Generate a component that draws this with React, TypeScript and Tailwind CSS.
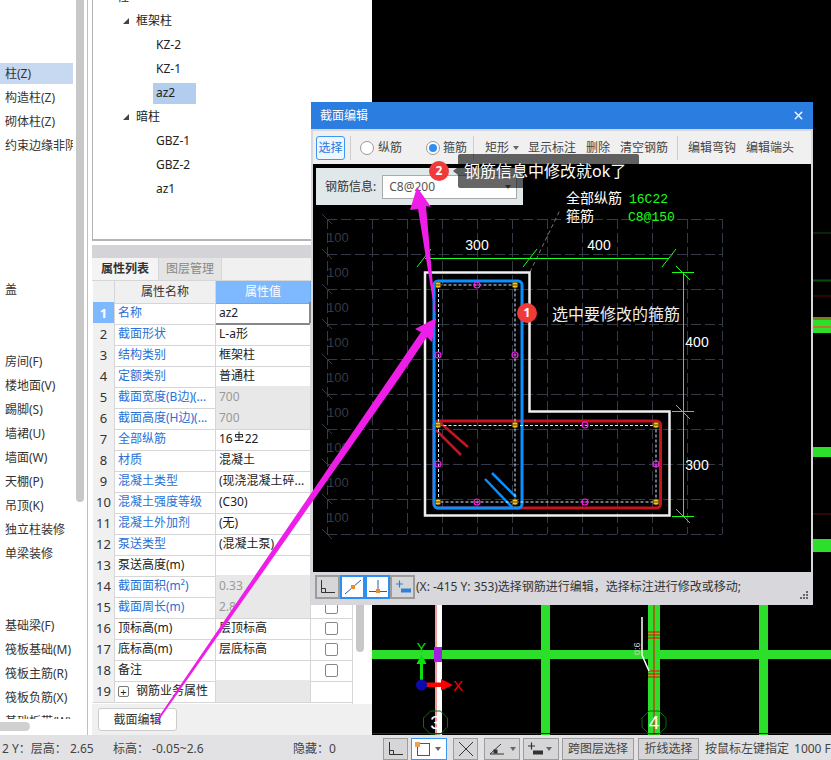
import type { ReactNode } from 'react';
import { X } from 'lucide-react';

type Row = {
  name: ReactNode;
  value?: ReactNode;
  blue?: boolean;
  locked?: boolean;
  check?: boolean;
};

const navItems = [
  '柱(Z)', '构造柱(Z)', '砌体柱(Z)', '约束边缘非阴', '', '', '', '', '', '盖', '', '',
  '房间(F)', '楼地面(V)', '踢脚(S)', '墙裙(U)', '墙面(W)', '天棚(P)', '吊顶(K)', '独立柱装修', '单梁装修', '', '',
  '基础梁(F)', '筏板基础(M)', '筏板主筋(R)', '筏板负筋(X)', '基础板带(W)',
];

const treeItems = [
  { label: '柱', level: 0 },
  { label: '框架柱', level: 1 },
  { label: 'KZ-2', level: 2 },
  { label: 'KZ-1', level: 2 },
  { label: 'az2', level: 2, active: true },
  { label: '暗柱', level: 1 },
  { label: 'GBZ-1', level: 2 },
  { label: 'GBZ-2', level: 2 },
  { label: 'az1', level: 2 },
];

// 三级钢符号
const RebarMark = () => (
  <svg width="10" height="11" viewBox="0 0 10 11" className="mx-px inline-block align-[1px]">
    <path d="M1.5 6V3.5h7V6M1.5 6h7M5 0.5V9M0.5 9.5h9" fill="none" stroke="#222" strokeWidth="1" />
  </svg>
);

const rows: Row[] = [
  { name: '名称', value: 'az2', blue: true },
  { name: '截面形状', value: 'L-a形', blue: true },
  { name: '结构类别', value: '框架柱', blue: true },
  { name: '定额类别', value: '普通柱', blue: true },
  { name: '截面宽度(B边)(...', value: '700', blue: true, locked: true },
  { name: '截面高度(H边)(...', value: '700', blue: true, locked: true },
  { name: '全部纵筋', value: <>16<RebarMark />22</>, blue: true },
  { name: '材质', value: '混凝土', blue: true },
  { name: '混凝土类型', value: '(现浇混凝土碎...', blue: true },
  { name: '混凝土强度等级', value: '(C30)', blue: true },
  { name: '混凝土外加剂', value: '(无)', blue: true },
  { name: '泵送类型', value: '(混凝土泵)', blue: true },
  { name: '泵送高度(m)' },
  { name: '截面面积(m²)', value: '0.33', blue: true, locked: true },
  { name: '截面周长(m)', value: '2.8', blue: true, locked: true, check: true },
  { name: '顶标高(m)', value: '层顶标高', check: true },
  { name: '底标高(m)', value: '层底标高', check: true },
  { name: '备注', check: true },
];

const hGrid = [219, 254, 289, 324, 359, 394, 429, 464, 499, 534];
const vGrid = [327, 372, 407, 442, 477, 512, 547, 582, 617, 652, 687, 722];
const yellowBars = [[438, 285], [515, 285], [438, 425], [515, 425], [656, 425], [438, 502], [515, 502], [656, 502]];
const pinkBars = [[477, 285], [438, 355], [515, 355], [585, 425], [438, 464], [656, 464], [477, 502], [585, 502]];

const Tick = ({ x, y }: { x: number; y: number }) => (
  <line x1={x - 7} y1={y + 9} x2={x + 7} y2={y - 9} stroke="#19ff19" strokeWidth="1" />
);

function SectionDrawing() {
  return (
    <svg viewBox="313 164 498 408" className="block h-[408px] w-[498px]">
      {hGrid.map((y) => (
        <path key={y} d={`M327 ${y + 0.5}H722`} stroke="#343b47" strokeWidth="1" strokeDasharray="10 4" />
      ))}
      {vGrid.map((x) => (
        <path key={x} d={`M${x + 0.5} 219V534`} stroke="#343b47" strokeWidth="1" strokeDasharray="10 4" />
      ))}
      {hGrid.map((y) => (
        <path key={y} d={`M322 ${y - 5}L332 ${y + 5}`} stroke="#343b47" />
      ))}
      {hGrid.slice(0, 9).map((y) => (
        <text key={y} x="327" y={y + 23} fontSize="13" fill="#343b47" fontFamily="Liberation Sans">100</text>
      ))}
      <path d="M530 272L560 210" stroke="#777" strokeDasharray="4 3" />

      <line x1="425" y1="258.5" x2="669" y2="258.5" stroke="#19ff19" />
      <line x1="683.5" y1="272" x2="683.5" y2="516" stroke="#19ff19" />
      <line x1="672" y1="272.5" x2="694" y2="272.5" stroke="#19ff19" />
      <line x1="672" y1="411.5" x2="694" y2="411.5" stroke="#19ff19" />
      <line x1="672" y1="516.5" x2="694" y2="516.5" stroke="#19ff19" />
      <Tick x={424} y={258} />
      <Tick x={530} y={258} />
      <Tick x={669} y={258} />
      <path d="M676 266L690 280M676 405L690 419M676 509L690 523" stroke="#19ff19" />
      <g fontSize="14" fill="#fff" fontFamily="Liberation Sans" textAnchor="middle">
        <text x="477" y="250">300</text>
        <text x="599" y="250">400</text>
        <text x="697" y="347">400</text>
        <text x="697" y="470">300</text>
      </g>

      <path d="M425 272.5H529.5V411.5H669.5V515.5H425Z" fill="none" stroke="#efefef" strokeWidth="2.5" />
      <rect x="434" y="421" width="226.500" height="87" rx="4" fill="none" stroke="#c8141e" strokeWidth="3" />
      <path d="M437 420L468 447M436 430L461 455" stroke="#c8141e" strokeWidth="2.500" />
      <rect x="434" y="281" width="88" height="227" rx="4" fill="none" stroke="#0a8fff" strokeWidth="3" />
      <path d="M492 473L516 497M485 479L512 507" stroke="#0a8fff" strokeWidth="2.500" />
      <path d="M438.500 285H515V502H438.500ZM515 425.500H656V502H515M438.500 425.500H515" fill="none" stroke="#dce8ff" strokeDasharray="3 2" />
      {yellowBars.map(([x, y]) => (
        <g key={`${x}-${y}`}>
          <circle cx={x} cy={y} r="3" fill="#f5c518" stroke="#6b5200" strokeWidth="0.8" />
          <path d={`M${x - 3} ${y}H${x + 3}`} stroke="#222" strokeWidth="0.8" />
        </g>
      ))}
      {pinkBars.map(([x, y]) => (
        <g key={`${x}-${y}`}>
          <circle cx={x} cy={y} r="3" fill="none" stroke="#f01ce8" strokeWidth="1.200" />
          <path d={`M${x - 3} ${y}H${x + 3}`} stroke="#f01ce8" strokeWidth="0.8" />
        </g>
      ))}

      <g fontSize="14" fontFamily="Noto Sans CJK SC">
        <text x="566" y="203" fill="#fff">全部纵筋</text>
        <text x="566" y="221" fill="#fff">箍筋</text>
      </g>
      <g fontSize="13" fontFamily="Liberation Mono" fill="#19ff19">
        <text x="629" y="203">16C22</text>
        <text x="628" y="221">C8@150</text>
      </g>
    </svg>
  );
}

function CadCanvas() {
  return (
    <svg viewBox="372 0 459 735" className="block h-[735px] w-[459px]">
      <path d="M813 233H831" stroke="#0b4a0b" />
      <path d="M813 280.500H831" stroke="#0b4a0b" strokeWidth="2" />
      <path d="M813 296H831" stroke="#5a0a0a" />
      <rect x="813" y="317" width="18" height="3" fill="#7d7d20" />
      <rect x="813" y="320" width="18" height="13" fill="#2bdf2b" />
      <rect x="813" y="326" width="18" height="2" fill="#b9782a" />
      <rect x="813" y="447" width="18" height="10" fill="#2bdf2b" />
      <path d="M813 514H831" stroke="#5a0a0a" />
      <rect x="813" y="539" width="18" height="13" fill="#2bdf2b" />

      <rect x="541" y="600" width="9" height="135" fill="#2bdf2b" />
      <rect x="648" y="600" width="12" height="135" fill="#2bdf2b" />
      <rect x="759" y="600" width="9" height="135" fill="#2bdf2b" />
      <rect x="372" y="650" width="459" height="9" fill="#2bdf2b" />
      <rect x="435" y="600" width="7" height="135" fill="#fff" />
      <path d="M436 600V735" stroke="#e33" />
      <rect x="434" y="647" width="8" height="15" fill="#a020e0" />

      <path d="M654 600V735" stroke="#f00" />
      <path d="M648 632H660M648 635H660M648 638H660M648 671H660M648 674H660M648 677H660" stroke="#f00" />
      <path d="M642 617V655L649 671" fill="none" stroke="#fff" strokeWidth="1.500" />
      <text x="0" y="0" transform="translate(640 655) rotate(-90)" fontSize="9" fill="#ccc" fontFamily="Liberation Sans">0:6</text>

      <path d="M372 733.500H831" stroke="#6b0a0a" />

      <path d="M420 683V664H416.500L421.500 654L426.500 664H423V683Z" fill="#0be00b" />
      <path d="M426 682.500H441V679L453 685L441 690.500V687H426Z" fill="#f00" />
      <circle cx="421.500" cy="685" r="5.500" fill="#0a0ab0" />
      <text x="421.500" y="653" fontSize="14" fill="#0be00b" textAnchor="middle" fontFamily="Liberation Sans">Y</text>
      <text x="453" y="691" fontSize="15" fill="#f00" fontFamily="Liberation Sans">X</text>

      {[[435.500, '3'], [654, '4']].map(([x, label]) => (
        <g key={label as string}>
          <path
            d={`M${(x as number) - 5} 711L${(x as number) + 5} 711L${(x as number) + 12} 718L${(x as number) + 12} 727L${(x as number) + 5} 734L${(x as number) - 5} 734L${(x as number) - 12} 727L${(x as number) - 12} 718Z`}
            fill="none"
            stroke="#0b6b0b"
          />
          <text x={x as number} y="729" fontSize="19" fill="#fff" textAnchor="middle" fontFamily="Liberation Sans">{label}</text>
        </g>
      ))}
    </svg>
  );
}

const ToolButton = ({ active, children }: { active?: boolean; children: ReactNode }) => (
  <div className={`flex h-6 w-[25px] items-center justify-center border-2 ${active ? 'border-[#2f8ff0] bg-white' : 'border-[#9c9c9c] bg-[#d6d6d9]'}`}>
    {children}
  </div>
);

const OrthoIcon = () => (
  <svg width="16" height="14" viewBox="0 0 16 14" fill="none" stroke="#333">
    <path d="M1.500 0V12.500H15M1.500 8.500H5.500V12.500" />
  </svg>
);
const MidIcon = () => (
  <svg width="18" height="16" viewBox="0 0 18 16" fill="none">
    <path d="M1 15L17 1" stroke="#2a5fa8" />
    <rect x="7" y="6" width="4" height="4" fill="#f08a24" />
  </svg>
);
const PerpIcon = () => (
  <svg width="18" height="14" viewBox="0 0 18 14" fill="none">
    <path d="M9 0V12M0 11.500H18" stroke="#2a5fa8" />
    <rect x="7" y="9" width="4" height="4" fill="#f08a24" />
  </svg>
);
const DimIcon = ({ color = '#2f80d8' }: { color?: string }) => (
  <svg width="16" height="14" viewBox="0 0 16 14" fill="none">
    <path d="M1 4H8M4.500 0.500V7.500" stroke={color} strokeWidth="1.200" />
    <rect x="6" y="8.500" width="10" height="4" fill={color} />
  </svg>
);
const Caret = () => <span className="block h-0 w-0 border-x-[3.500px] border-t-[4px] border-x-transparent border-t-[#666]" />;

function SectionDialog() {
  return (
    <div className="absolute left-[311px] top-[102px] flex h-[503px] w-[502px] flex-col bg-[#d8d8dc]">
      <div className="flex h-[27px] items-center justify-between bg-[#2b7de0] pl-[9px] pr-[8px] text-[12px] text-white">
        <span>截面编辑</span>
        <X size={13} strokeWidth={2.500} />
      </div>
      <div className="mx-[2px] mt-[2px] flex h-[33px] items-center bg-[#f0f0f0] pl-[3px] text-[12px] text-[#444]">
        <span className="flex h-[24px] w-[29px] items-center justify-center rounded-[3px] border border-[#3d96f0] bg-[#eef6ff] text-[#1f7ae0]">选择</span>
        <span className="mx-[5px] h-6 w-px bg-[#ccc]" />
        <span className="ml-[4px] h-[14px] w-[14px] rounded-full border border-[#999] bg-white" />
        <span className="ml-[4px]">纵筋</span>
        <span className="ml-[24px] flex h-[14px] w-[14px] items-center justify-center rounded-full border border-[#999] bg-white">
          <span className="h-2 w-2 rounded-full bg-[#2f8ff0]" />
        </span>
        <span className="ml-[3px]">箍筋</span>
        <span className="ml-[6px] mr-[5px] h-6 w-px bg-[#ccc]" />
        <span className="ml-[6px]">矩形</span>
        <span className="ml-[4px] mr-[9px]"><Caret /></span>
        <span>显示标注</span>
        <span className="ml-[10px]">删除</span>
        <span className="ml-[10px]">清空钢筋</span>
        <span className="mx-[9px] h-6 w-px bg-[#ccc]" />
        <span className="ml-px">编辑弯钩</span>
        <span className="ml-[10px]">编辑端头</span>
      </div>
      <div className="relative mx-[2px] h-[408px] bg-black">
        <SectionDrawing />
        <div className="absolute left-[3px] top-[4px] flex h-[37px] w-[207px] items-center bg-[#e1e8ea] pl-[9px] text-[12px] text-[#333]">
          <span>钢筋信息:</span>
          <div className="ml-[6px] flex h-[24px] w-[135px] items-center justify-between border border-[#aaa] bg-white pl-[6px] pr-[5px] text-[#555]">
            <span>C8@200</span>
            <Caret />
          </div>
        </div>
      </div>
      <div className="mx-[2px] flex h-[29px] items-center pl-[2px] text-[12px] text-[#333]">
        <ToolButton><OrthoIcon /></ToolButton>
        <ToolButton active><MidIcon /></ToolButton>
        <ToolButton active><PerpIcon /></ToolButton>
        <ToolButton><DimIcon /></ToolButton>
        <span className="ml-px whitespace-nowrap">(X: -415 Y: 353)选择钢筋进行编辑，选择标注进行修改或移动;</span>
      </div>
      <svg width="8" height="8" viewBox="0 0 8 8" fill="#666" className="absolute bottom-[6px] right-[5px]">
        <rect x="6" y="0" width="2" height="2" />
        <rect x="3" y="3" width="2" height="2" />
        <rect x="6" y="3" width="2" height="2" />
        <rect x="0" y="6" width="2" height="2" />
        <rect x="3" y="6" width="2" height="2" />
        <rect x="6" y="6" width="2" height="2" />
      </svg>
    </div>
  );
}

function PropertyRow({ row, index }: { row: Row; index: number }) {
  const first = index === 0;
  return (
    <div className="grid h-[21px] grid-cols-[22px_101px_95px_42px] text-[12px] leading-[22px]">
      <div className={`border-b border-r border-[#d6d6d6] text-center text-[13px] ${first ? 'bg-[#7eb8ff] font-bold text-white' : 'bg-[#f0f0f0] text-[#333]'}`}>
        {index + 1}
      </div>
      <div className={`overflow-hidden whitespace-nowrap border-b border-r border-[#d6d6d6] pl-[3px] ${row.blue ? 'text-[#2a6fd6]' : 'text-[#222]'}`}>
        {row.name}
      </div>
      <div className={`overflow-hidden whitespace-nowrap pl-[3px] ${first ? 'border-b-2 border-r-2 border-[#888]' : 'border-b border-r border-[#d6d6d6]'} ${row.locked ? 'bg-[#e8e8e8] text-[#999]' : 'text-[#222]'}`}>
        {row.value}
      </div>
      <div className="flex items-center justify-center border-b border-r border-[#d6d6d6]">
        {row.check && <span className="h-[13px] w-[13px] rounded-[2px] border border-[#888] bg-white" />}
      </div>
    </div>
  );
}

function PropertyPanel() {
  return (
    <div className="flex h-[735px] w-[284px] shrink-0 flex-col bg-white">
      <div className="ml-[4px] h-[241px] overflow-hidden border-b-2 border-l border-[#b4b4b4]">
        <div className="-mt-[15px] text-[12px] text-[#222]">
          {treeItems.map((item) => (
            <div key={item.label} className="flex h-6 items-center">
              {item.level === 1 && (
                <span className="ml-[30px] mr-[7px] h-0 w-0 border-b-[6px] border-l-[6px] border-b-[#444] border-l-transparent" />
              )}
              {item.level === 0 && <span className="ml-[24px]">{item.label}</span>}
              {item.level === 1 && <span>{item.label}</span>}
              {item.level === 2 && (
                <span className={`ml-[60px] flex h-[21px] w-[43px] items-center pl-[3px] ${item.active ? 'bg-[#b3cdee]' : ''}`}>{item.label}</span>
              )}
            </div>
          ))}
        </div>
      </div>
      <div className="mt-[4px] ml-[4px] h-[13px] bg-[#d4d4d8]" />
      <div className="ml-[4px] flex h-[23px] border-b border-[#d6d6d6] bg-[#f0f0f0] text-[12px] font-bold">
        <span className="flex w-[66px] items-center justify-center bg-[#f4f4f4] text-[#333]">属性列表</span>
        <span className="flex w-[64px] items-center justify-center border-x border-[#d6d6d6] bg-[#e4e4e4] font-normal text-[#888]">图层管理</span>
      </div>
      <div className="ml-[5px] flex h-[423px] overflow-hidden">
        <div className="w-[260px]">
          <div className="grid h-[21px] grid-cols-[22px_101px_95px_42px] text-[12px] leading-[22px]">
            <div className="border-b border-r border-[#d6d6d6] bg-[#f0f0f0]" />
            <div className="border-b border-r border-[#d6d6d6] bg-[#f0f0f0] text-center text-[#333]">属性名称</div>
            <div className="border-b border-r border-[#6aaaf0] bg-[#7eb8ff] text-center text-white">属性值</div>
            <div className="border-b border-r border-[#d6d6d6] bg-[#f0f0f0]" />
          </div>
          {rows.map((row, i) => (
            <PropertyRow key={i} row={row} index={i} />
          ))}
          <div className="grid h-[21px] grid-cols-[22px_101px_95px_42px] text-[12px] leading-[22px]">
            <div className="border-b border-r border-[#d6d6d6] bg-[#f0f0f0] text-center text-[13px] text-[#333]">19</div>
            <div className="flex items-center whitespace-nowrap border-b border-r border-[#d6d6d6] pl-[3px] text-[#222]">
              <span className="mr-[7px] flex h-[11px] w-[11px] items-center justify-center rounded-[2px] border border-[#777] text-[11px] leading-none">+</span>
              钢筋业务属性
            </div>
            <div className="border-b border-r border-[#d6d6d6] bg-[#e8e8e8]" />
            <div className="border-b border-r border-[#d6d6d6]" />
          </div>
          <div className="h-[21px] border-r border-[#d6d6d6]" />
        </div>
        <div className="ml-[3px] h-[371px] w-[8px] rounded-b-full bg-[#c8c8c8]" />
      </div>
      <div className="ml-[4px] flex h-[31px] items-center bg-[#f0f0f0] pl-[6px]">
        <span className="flex h-[23px] w-[79px] items-center justify-center rounded-[3px] border border-[#ccc] bg-white text-[12px] text-[#333]">截面编辑</span>
      </div>
    </div>
  );
}

function StatusBar() {
  return (
    <div className="flex h-[25px] items-center bg-[#e2e2e4] pt-[3px] text-[12px] text-[#444]">
      <span className="ml-[2px] w-[111px] whitespace-nowrap">2 Y：层高： 2.65</span>
      <span className="w-[180px] whitespace-nowrap">标高： -0.05~2.6</span>
      <span className="w-[90px] whitespace-nowrap">隐藏：0</span>
      <span className="flex h-[22px] w-[25px] items-center justify-center border border-[#9c9c9c] bg-[#d6d6d9]"><OrthoIcon /></span>
      <span className="relative ml-[3px] flex h-[22px] w-[36px] items-center gap-[5px] border border-[#3d96f0] bg-white pl-[5px]">
        <span className="h-[13px] w-[13px] border border-[#555]" />
        <span className="absolute left-[3px] top-[3px] h-[5px] w-[5px] bg-[#f0a050]" />
        <Caret />
      </span>
      <span className="ml-[6px] flex h-[22px] w-[25px] items-center justify-center border border-[#9c9c9c] bg-[#d6d6d9]">
        <svg width="16" height="16" viewBox="0 0 16 16" stroke="#333" fill="none">
          <path d="M1 1L15 15M15 1L1 15" />
        </svg>
      </span>
      <span className="ml-[6px] flex h-[22px] w-[36px] items-center gap-[5px] border border-[#9c9c9c] bg-[#d6d6d9] pl-[4px]">
        <svg width="16" height="12" viewBox="0 0 16 12" stroke="#333" fill="none">
          <path d="M1 11H15M1 11L12 1" />
          <rect x="5" y="7" width="3" height="3" fill="#333" />
        </svg>
        <Caret />
      </span>
      <span className="ml-[3px] flex h-[22px] w-[36px] items-center gap-[3px] border border-[#9c9c9c] bg-[#d6d6d9] pl-[3px]">
        <DimIcon color="#333" />
        <Caret />
      </span>
      <span className="ml-[3px] flex h-[22px] w-[72px] items-center justify-center border border-[#9c9c9c] bg-[#d6d6d9]">跨图层选择</span>
      <span className="ml-[4px] flex h-[22px] w-[61px] items-center justify-center border border-[#9c9c9c] bg-[#d6d6d9]">折线选择</span>
      <span className="ml-[6px] whitespace-nowrap">按鼠标左键指定</span>
      <span className="ml-[5px] whitespace-nowrap">1000 F</span>
    </div>
  );
}

export default function App() {
  return (
    <div className="relative h-[760px] w-[831px] overflow-hidden bg-white font-['Noto_Sans','Noto_Sans_CJK_SC',sans-serif]">
      <div className="flex h-[735px]">
        {/* 左侧构件列表 */}
        <div className="relative w-[88px] shrink-0 border-r border-[#c0c0c0] bg-white">
          <div className="flex h-[719px]">
            <div className="w-[73px] overflow-hidden pt-[61px] text-[12px] text-[#333]">
              {navItems.map((item, i) => (
                <div key={i} className="flex h-6 items-center">
                  <div className={`flex h-[21px] w-full items-center overflow-hidden whitespace-nowrap pl-[5px] pt-px ${i === 0 ? 'bg-[#c7d9f1]' : ''}`}>
                    {item}
                  </div>
                </div>
              ))}
            </div>
            <div className="ml-[3px] h-[502px] w-[8px] rounded-b-full bg-[#c8c8c8]" />
          </div>
          <div className="mt-[3px] h-[9px] w-[30px] rounded-r-full bg-[#d0d0d0]" />
        </div>
        <PropertyPanel />
        <div className="w-[459px] bg-black">
          <CadCanvas />
        </div>
      </div>
      <StatusBar />

      <SectionDialog />

      {/* 标注箭头 */}
      <svg viewBox="0 0 831 760" className="pointer-events-none absolute inset-0 h-[760px] w-[831px]">
        <polygon points="156,724 158,718 421,332 415,329 436,318 432,342 427,337 400,377" fill="#ee1ee8" />
        <polygon points="417,187 431,207 426,206 436,320 418,209 410,210" fill="#ee1ee8" />
      </svg>

      <div className="absolute left-[458px] top-[154px] flex h-[34px] w-[181px] items-center rounded-[2px] bg-black/60 pl-[6px] text-[16px] whitespace-nowrap text-white">
        钢筋信息中修改就ok了
      </div>
      <span className="absolute left-[453px] top-[167px] h-0 w-0 border-y-[4px] border-r-[5px] border-y-transparent border-r-black/60" />
      <span className="absolute left-[429px] top-[161px] flex h-5 w-5 items-center justify-center rounded-full bg-[#f03a3a] text-[12px] font-bold text-white">2</span>
      <span className="absolute left-[517px] top-[303px] flex h-5 w-5 items-center justify-center rounded-full bg-[#f03a3a] text-[12px] font-bold text-white">1</span>
      <span className="absolute left-[552px] top-[303px] text-[16px] leading-[22px] whitespace-nowrap text-[#eee]">选中要修改的箍筋</span>
    </div>
  );
}
